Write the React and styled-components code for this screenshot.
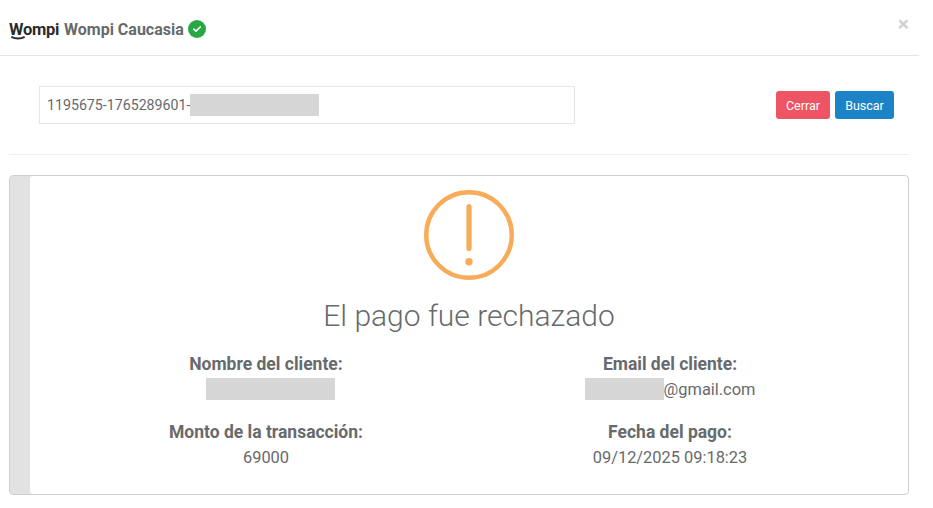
import React from 'react';
import styled, { createGlobalStyle } from 'styled-components';

const GlobalStyle = createGlobalStyle`
  html, body {
    margin: 0;
    background: #fff;
    font-family: Roboto, "Liberation Sans", sans-serif;
    color: #676a6c;
  }
`;

const Page = styled.div`
  width: 919px;
  height: 508px;
  box-sizing: border-box;
`;

const Header = styled.header`
  height: 56px;
  box-sizing: border-box;
  border-bottom: 1px solid #e5e5e5;
  padding: 3px 9px 0;
  display: flex;
  align-items: center;
  position: relative;
`;

const Logo = styled.div`
  display: flex;
  flex-direction: column;
  align-items: flex-start;
  width: 50px;
  margin-right: 5px;
  margin-top: 5px;
`;

const LogoText = styled.span`
  font-size: 16.5px;
  font-weight: 700;
  line-height: 13px;
  letter-spacing: -0.3px;
  color: #2b2b2b;
`;

const LogoSwoosh = styled.svg`
  display: block;
  margin-left: 2px;
`;

const Title = styled.span`
  font-size: 16px;
  font-weight: 700;
  color: #676a6c;
`;

const VerifiedBadge = styled.span`
  width: 18px;
  height: 18px;
  margin-left: 4px;
  border-radius: 50%;
  background: #28a745;
  display: flex;
  align-items: center;
  justify-content: center;
`;

const CloseButton = styled.span`
  position: absolute;
  right: 10px;
  top: 14px;
  font-size: 21px;
  line-height: 21px;
  font-weight: 700;
  color: #d2d2d2;
`;

const SearchRow = styled.div`
  display: flex;
  align-items: center;
  justify-content: space-between;
  margin: 30px 25px 0 39px;
  height: 38px;
`;

const SearchInput = styled.div`
  width: 536px;
  height: 38px;
  box-sizing: border-box;
  border: 1px solid #e5e6e7;
  padding-left: 7px;
  display: flex;
  align-items: center;
  font-size: 14.2px;
  color: #676a6c;
`;

const Redacted = styled.span`
  display: inline-block;
  width: ${(p) => p.$w}px;
  height: 22px;
  margin-left: ${(p) => p.$shift || 0}px;
  background: #d6d6d6;
`;

const Actions = styled.div`
  display: flex;
  gap: 5px;
`;

const Button = styled.button`
  height: 28px;
  width: ${(p) => p.$w}px;
  padding: 0;
  border: none;
  border-radius: 3px;
  background: ${(p) => p.$bg};
  color: #fff;
  font-family: inherit;
  font-size: 12.5px;
`;

const Divider = styled.hr`
  margin: 30px 10px 20px 9px;
  border: none;
  border-top: 1px solid #eee;
`;

const Card = styled.section`
  margin: 0 10px 0 9px;
  height: 320px;
  box-sizing: border-box;
  border: 1px solid #cfcfcf;
  border-radius: 4px;
  box-shadow: inset 20px 0 0 #e2e2e2;
  display: flex;
  flex-direction: column;
  align-items: center;
  padding: 14px 34px 0 54px;
`;

const WarningIcon = styled.svg`
  display: block;
`;

const Heading = styled.h2`
  margin: 18px 0 0;
  font-size: 30px;
  line-height: 36px;
  font-weight: 300;
  color: #676a6c;
`;

const InfoGrid = styled.div`
  align-self: stretch;
  margin: 18px 2px 0 0;
  display: grid;
  grid-template-columns: 1fr 1fr;
  row-gap: 19px;
`;

const InfoItem = styled.div`
  text-align: center;
  font-size: 16.4px;
  line-height: 25px;
`;

const InfoLabel = styled.div`
  font-weight: 700;
  font-size: 17.5px;
`;

const InfoValue = styled.div`
  display: flex;
  justify-content: center;
  align-items: center;
  height: 24px;
`;

export default function App() {
  return (
    <Page>
      <GlobalStyle />
      <Header>
        <Logo>
          <LogoText>Wompi</LogoText>
          <LogoSwoosh width="14" height="4" viewBox="0 0 14 4">
            <path d="M1 1.2 C4 3 10 3 13 1.2" fill="none" stroke="#2b2b2b" strokeWidth="2" strokeLinecap="round" />
          </LogoSwoosh>
        </Logo>
        <Title>Wompi Caucasia</Title>
        <VerifiedBadge>
          <svg width="10" height="10" viewBox="0 0 10 10">
            <path d="M1.8 5.2 L4 7.2 L8.2 3" fill="none" stroke="#fff" strokeWidth="1.7" strokeLinecap="round" strokeLinejoin="round" />
          </svg>
        </VerifiedBadge>
        <CloseButton>×</CloseButton>
      </Header>

      <SearchRow>
        <SearchInput>
          1195675-1765289601-
          <Redacted $w={129} />
        </SearchInput>
        <Actions>
          <Button $w={54} $bg="#ed5565">Cerrar</Button>
          <Button $w={59} $bg="#1c84c6">Buscar</Button>
        </Actions>
      </SearchRow>

      <Divider />

      <Card>
        <WarningIcon width="90" height="90" viewBox="0 0 90 90">
          <circle cx="45" cy="45" r="42.75" fill="none" stroke="#f8ac59" strokeWidth="4.5" />
          <line x1="45" y1="16.5" x2="45" y2="58.5" stroke="#f8ac59" strokeWidth="5.2" strokeLinecap="round" />
          <circle cx="45" cy="71.7" r="3.7" fill="#f8ac59" />
        </WarningIcon>
        <Heading>El pago fue rechazado</Heading>
        <InfoGrid>
          <InfoItem>
            <InfoLabel>Nombre del cliente:</InfoLabel>
            <InfoValue><Redacted $w={129} $shift={9} /></InfoValue>
          </InfoItem>
          <InfoItem>
            <InfoLabel>Email del cliente:</InfoLabel>
            <InfoValue><Redacted $w={79} />@gmail.com</InfoValue>
          </InfoItem>
          <InfoItem>
            <InfoLabel>Monto de la transacción:</InfoLabel>
            <InfoValue>69000</InfoValue>
          </InfoItem>
          <InfoItem>
            <InfoLabel>Fecha del pago:</InfoLabel>
            <InfoValue>09/12/2025 09:18:23</InfoValue>
          </InfoItem>
        </InfoGrid>
      </Card>
    </Page>
  );
}
